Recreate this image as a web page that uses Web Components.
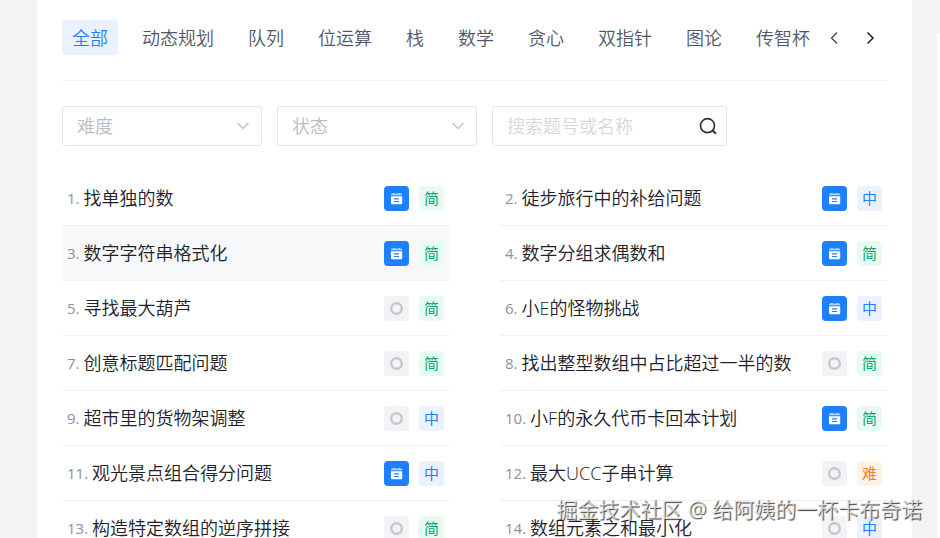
<!DOCTYPE html>
<html lang="zh-CN">
<head>
<meta charset="utf-8">
<title>题库</title>
<style>
  html, body { margin: 0; height: 100%; overflow: hidden; }
  body { background: #f1f3f5; font-family: "Open Sans", "Noto Sans CJK SC", sans-serif; font-weight: 350; color: #1d2129; }
</style>
</head>
<body>
<problem-page></problem-page>

<script>
const icons = {
  left: '<svg viewBox="0 0 14 14" width="14" height="14"><path d="M10 1.500 4.500 7l5.500 5.500" fill="none" stroke="#444" stroke-width="1.300"/></svg>',
  right: '<svg viewBox="0 0 14 14" width="14" height="14"><path d="M4.500 1.500 10 7l-5.500 5.500" fill="none" stroke="#222" stroke-width="1.500"/></svg>',
  down: '<svg viewBox="0 0 14 14" width="14" height="14"><path d="m1.500 4 5.500 5.500L12.500 4" fill="none" stroke="#b8bcc4" stroke-width="1.200"/></svg>',
  search: '<svg viewBox="0 0 18 18" width="18" height="18"><circle cx="8.500" cy="8.700" r="7" fill="none" stroke="#333" stroke-width="1.700"/><path d="m13.500 13.500 3.500 3.200" stroke="#333" stroke-width="2"/></svg>',
  note: '<svg viewBox="0 0 25 25" width="25" height="25"><path d="M7 9.300V8.300q0-.8.800-.8H9V7h1.500v.5h4V7H16v.5h1.300q.8 0 .8.800v1z" fill="#b4d3ff"/><path d="M7 10.300h11.200V17q0 1.200-1 1.200H8q-1 0-1-1.200z" fill="#fff"/><path d="M10 12.900h5M10 15.500h5" stroke="#1e80ff" stroke-width="1.100"/></svg>',
  ring: '<svg viewBox="0 0 25 25" width="25" height="25"><circle cx="12.500" cy="12.500" r="5.300" fill="none" stroke="#c4c7cc" stroke-width="2.400"/></svg>'
};
const base = '*{box-sizing:border-box}svg{display:block}button,select,input{font:inherit;margin:0;border:0;background:none}';

function define(name, render) {
  customElements.define(name, class extends HTMLElement {
    connectedCallback() {
      if (this.shadowRoot) return;
      const t = document.createElement('template');
      t.innerHTML = render(this);
      this.attachShadow({ mode: 'open' }).append(t.content.cloneNode(true));
    }
  });
}

define('topic-tab', el => `<style>${base}
  :host{display:block;flex:none}
  button{display:block;height:35px;padding:1px 10px 0;border-radius:4px;font-size:18px;line-height:35px;color:#515767;white-space:nowrap}
  :host([active]) button{background:#eaf2ff;color:#1e80ff}
</style><button type="button"><slot></slot></button>`);

define('topic-bar', () => `<style>${base}
  :host{display:flex;align-items:center;padding:20px 0 25px;border-bottom:1px solid #eeeff1}
  .tabs{display:flex;gap:14px;flex:1;min-width:0;overflow:hidden}
  .nav{display:flex;flex:none;gap:8px;padding:0 3px 0 8px}
  .nav button{display:grid;place-items:center;width:28px;height:28px;padding:0}
</style><div class="tabs"><slot></slot></div>
<div class="nav"><button type="button" aria-label="向左">${icons.left}</button><button type="button" aria-label="向右">${icons.right}</button></div>`);

define('filter-select', el => `<style>${base}
  :host{display:grid;flex:0 1 200px;min-width:0;align-items:center}
  select,svg{grid-area:1/1}
  select{appearance:none;width:100%;height:40px;padding:0 40px 0 14px;border:1px solid #e4e6eb;border-radius:3px;font-size:18px;color:#b8bcc4;background:#fff}
  svg{justify-self:end;margin-right:12px;pointer-events:none}
</style><select aria-label="${el.getAttribute('label')}"><option>${el.getAttribute('label')}</option></select>${icons.down}`);

define('search-box', () => `<style>${base}
  :host{display:flex;box-sizing:border-box;flex:0 1 235px;min-width:0;align-items:center;height:40px;border:1px solid #e4e6eb;border-radius:3px}
  input{flex:1;min-width:0;padding:0 0 0 14px;font-size:18px;outline:0}
  input::placeholder{color:#d5d8dc;opacity:1}
  button{padding:0 9px 0 8px}
</style><input type="text" aria-label="搜索题号或名称" placeholder="搜索题号或名称"><button type="button" aria-label="搜索">${icons.search}</button>`);

define('state-icon', el => `<style>${base}
  :host{display:block;flex:none;border-radius:4px;background:#f2f3f5}
  :host([kind=note]){background:#1e80ff}
</style>${icons[el.getAttribute('kind')]}`);

define('level-tag', () => `<style>
  :host{display:block;flex:none;width:25px;height:25px;border-radius:4px;font-size:15px;font-weight:400;line-height:25px;text-align:center;color:#1e80ff;background:#eaf2ff}
  :host([level=easy]){color:#00a870;background:#e8fbf2}
  :host([level=hard]){color:#ff7a1f;background:#fff3e8}
</style><slot></slot>`);

define('problem-row', el => `<style>${base}
  :host{display:flex;box-sizing:border-box;align-items:center;height:55px;padding:0 5px;border-bottom:1px solid #eeeff1;gap:10px}
  :host([hovered]){background:#f7f8fa}
  .name{display:flex;align-items:center;gap:4px;flex:1;min-width:0;white-space:nowrap}
  .no{font-size:15px;line-height:26px;font-weight:400;color:#8a919f}
  .title{font-size:18px;line-height:26px}
</style><div class="name"><span class="no">${el.getAttribute('no')}.</span><span class="title"><slot></slot></span></div>
<state-icon kind="${el.getAttribute('state')}"></state-icon><slot name="level"></slot>`);

define('side-rail', () => `<style>
  :host{display:flex;flex-direction:column;gap:34px}
  div{background:#fff}
  div:first-child{height:242px}
  div:last-child{flex:1}
</style><div></div><div></div>`);

define('water-mark', () => `<style>
  :host{position:absolute;right:18px;bottom:14px;font-size:21px;line-height:30px;font-weight:400;white-space:pre;color:#f4f4f4b8;text-shadow:1px 1px 1px #000000c0;pointer-events:none}
</style><slot></slot>`);

const topics = ['全部','动态规划','队列','位运算','栈','数学','贪心','双指针','图论','传智杯'];
const levels = { easy: '简', mid: '中', hard: '难' };
const problems = [
  ['找单独的数','note','easy'],['徒步旅行中的补给问题','note','mid'],
  ['数字字符串格式化','note','easy'],['数字分组求偶数和','note','easy'],
  ['寻找最大葫芦','ring','easy'],['小E的怪物挑战','note','mid'],
  ['创意标题匹配问题','ring','easy'],['找出整型数组中占比超过一半的数','ring','easy'],
  ['超市里的货物架调整','ring','mid'],['小F的永久代币卡回本计划','note','easy'],
  ['观光景点组合得分问题','note','mid'],['最大UCC子串计算','ring','hard'],
  ['构造特定数组的逆序拼接','ring','easy'],['数组元素之和最小化','ring','mid']
];

define('problem-page', () => `<style>${base}
  :host{position:relative;display:grid;box-sizing:border-box;grid-template-columns:minmax(0,1fr) 3px;column-gap:25px;height:100%;padding-left:37px;overflow:hidden}
  main{padding:0 25px;background:#fff;min-width:0}
  .filters{display:flex;gap:15px;padding:25px 0}
  .list{display:grid;grid-template-columns:repeat(2,minmax(0,1fr));column-gap:51px}
</style>
<main>
  <topic-bar>${topics.map((t, i) => `<topic-tab${i ? '' : ' active'}>${t}</topic-tab>`).join('')}</topic-bar>
  <div class="filters"><filter-select label="难度"></filter-select><filter-select label="状态"></filter-select><search-box></search-box></div>
  <div class="list">${problems.map(([t, s, l], i) => `<problem-row no="${i + 1}" state="${s}"${i === 2 ? ' hovered' : ''}>${t}<level-tag slot="level" level="${l}">${levels[l]}</level-tag></problem-row>`).join('')}</div>
</main>
<side-rail></side-rail>
<water-mark>掘金技术社区 @ 给阿姨的一杯卡布奇诺</water-mark>`);
</script>
</body>
</html>
